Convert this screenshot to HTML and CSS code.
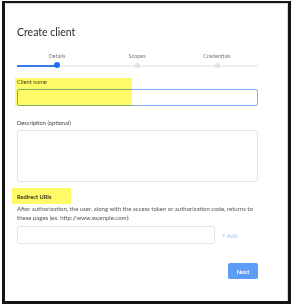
FILE: index.html
```html
<!DOCTYPE html>
<html lang="en">
<head>
    <meta charset="UTF-8">
    <title>Create client</title>
    <link rel="stylesheet" href="styles.css">
</head>
<body>
    <div class="frame">
        <h1 class="title">Create client</h1>

        <div class="stepper">
            <div class="step active">
                <span class="step-label">Details</span>
                <span class="step-dot"></span>
            </div>
            <div class="step">
                <span class="step-label">Scopes</span>
                <span class="step-dot"></span>
            </div>
            <div class="step">
                <span class="step-label">Credentials</span>
                <span class="step-dot"></span>
            </div>
        </div>

        <div class="field field-name">
            <span class="mark mark-name"></span>
            <label class="field-label">Client name</label>
            <div class="input input-focus"></div>
        </div>

        <div class="field field-desc">
            <label class="field-label">Description (optional)</label>
            <div class="input textarea"></div>
        </div>

        <div class="field field-uris">
            <span class="mark mark-uris"></span>
            <label class="field-label bold">Redirect URIs</label>
            <p class="hint">After authorization, the user, along with the access token or authorization code, returns to these pages (ex. http://www.example.com):</p>
            <div class="uri-row">
                <div class="input uri-input"></div>
                <span class="add-link">+ Add</span>
            </div>
        </div>

        <div class="actions">
            <button class="next-btn">Next</button>
        </div>
    </div>
</body>
</html>
```

FILE: styles.css
```css
* {
    margin: 0;
    padding: 0;
    box-sizing: border-box;
}

body {
    font-family: 'Lato', sans-serif;
    background: #ffffff;
    color: #333;
}

.frame {
    margin: 1px 0 0 2px;
    width: 289px;
    height: 303px;
    border: 3px solid #151515;
    border-top-width: 2px;
    background: #fff;
    box-shadow: inset -1px 1px 0 #d8d8d8;
    padding: 23px 30px 0 12px;
}

.title {
    font-size: 10.5px;
    font-weight: 400;
    color: #2b2b2b;
    line-height: 13px;
}

/* stepper */
.stepper {
    display: grid;
    grid-template-columns: repeat(3, 80px);
    margin-top: 13px;
    position: relative;
}

.stepper::before {
    content: '';
    position: absolute;
    left: 0;
    right: 0;
    bottom: 2px;
    height: 2px;
    background: #eef0f5;
}

.step {
    display: flex;
    flex-direction: column;
    align-items: center;
    position: relative;
}

.step.active::before {
    content: '';
    position: absolute;
    left: 0;
    width: 50%;
    bottom: 2px;
    height: 2px;
    background: #3a7bea;
}

.step-label {
    font-size: 5.5px;
    color: #777;
    line-height: 8px;
}

.step-dot {
    width: 5px;
    height: 5px;
    border-radius: 50%;
    background: #dde1e9;
    margin-top: 3px;
    margin-bottom: 1px;
    position: relative;
}

.step.active .step-dot {
    width: 6px;
    height: 6px;
    background: #1f6ff0;
    margin-bottom: 0;
    margin-top: 2px;
}

/* fields */
.field {
    position: relative;
}

.field-name {
    margin-top: 9px;
}

.field-desc {
    margin-top: 13px;
}

.field-uris {
    margin-top: 11px;
}

.field-label {
    display: block;
    font-size: 5.7px;
    line-height: 8px;
    color: #444;
}

.field-label.bold {
    font-weight: 700;
    color: #333;
}

.input {
    border: 1px solid #e1e5ea;
    border-radius: 2px;
    background: #fff;
}

.input-focus {
    margin-top: 3px;
    height: 17px;
    border-color: #7fb0f6;
}

.textarea {
    margin-top: 3px;
    height: 52px;
}

.mark {
    position: absolute;
    background: rgba(255, 248, 40, 0.7);
    mix-blend-mode: multiply;
    z-index: 2;
}

.mark-name {
    left: -2px;
    top: 0;
    width: 117px;
    height: 28px;
}

.mark-uris {
    left: -5px;
    top: -5px;
    width: 59px;
    height: 16px;
}

.hint {
    font-size: 6px;
    line-height: 9px;
    color: #555;
    margin-top: 3px;
    padding-right: 2px;
}

.uri-row {
    display: flex;
    align-items: center;
    margin-top: 4px;
}

.uri-input {
    width: 198px;
    height: 18px;
}

.add-link {
    margin-left: 7px;
    font-size: 5.8px;
    color: #a9c6f5;
}

.actions {
    display: flex;
    justify-content: flex-end;
    margin-top: 19px;
}

.next-btn {
    width: 30px;
    height: 16px;
    border: none;
    border-radius: 2px;
    background: #5c9cf7;
    color: #fff;
    font-family: 'Lato', sans-serif;
    font-size: 5.8px;
    font-weight: 700;
}
```
